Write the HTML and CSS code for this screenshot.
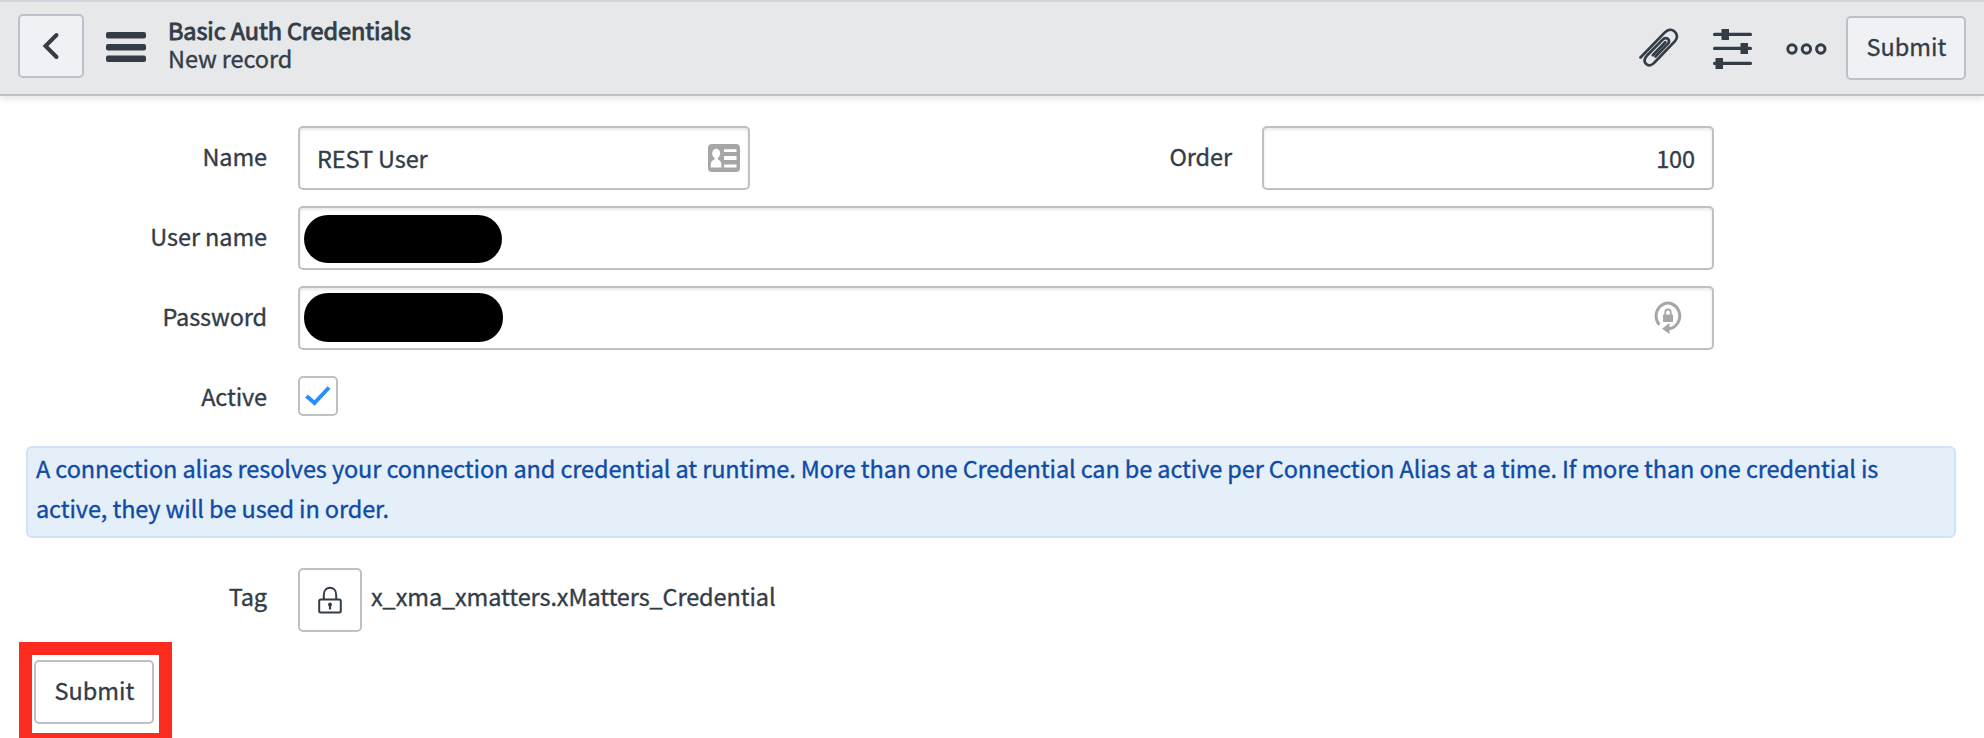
FILE: index.html
```html
<!DOCTYPE html>
<html lang="en">
<head>
<meta charset="utf-8">
<title>Basic Auth Credentials</title>
<link rel="stylesheet" href="styles.css">
</head>
<body>
<header class="toolbar">
  <button class="btn back" aria-label="Back">
    <svg width="18" height="28" viewBox="0 0 18 28"><path d="M14.5 3 3.500 14 14.500 25" fill="none" stroke="#343d47" stroke-width="4" stroke-linecap="round"/></svg>
  </button>
  <svg class="menu" width="40" height="30" viewBox="0 0 40 30" fill="#343d47"><rect width="40" height="6.500" rx="2"/><rect y="12" width="40" height="6.500" rx="2"/><rect y="23.500" width="40" height="6.500" rx="2"/></svg>
  <div class="heading">
    <h1 class="title">Basic Auth Credentials</h1>
    <div class="subtitle">New record</div>
  </div>
  <div class="actions">
    <svg class="clip" width="40" height="40" viewBox="0 0 40 40" fill="none" stroke="#343d47" stroke-width="2.700" stroke-linecap="round" stroke-linejoin="round"><path d="M1.500 29.500 25.600 4.600C28.600 1.500 32.500.8 35.300 3.200C38.600 6 38.800 10.200 36 13.200L15.500 34.500C13 37.500 9.600 38.300 7.200 36C4.800 33.600 5.300 30.500 7.800 27.800L23.700 11.600C25.400 9.800 27.600 9.600 29 11C30.400 12.400 30 14.600 28.500 16.200L16.500 28.500"/><path d="M13.800 27.200 26.300 14.200"/></svg>
    <svg class="sliders" width="40" height="40" viewBox="0 0 40 40" fill="#343d47"><rect y="3.700" width="39" height="3.300" rx="1.500"/><rect x="8.500" width="7.500" height="11"/><rect y="17.700" width="39" height="3.300" rx="1.500"/><rect x="27.500" y="14" width="7.500" height="11"/><rect y="32.700" width="39" height="3.300" rx="1.500"/><rect x="2.500" y="29" width="7.500" height="11"/></svg>
    <svg class="dots" width="41" height="12" viewBox="0 0 41 12" fill="none" stroke="#343d47" stroke-width="3"><circle cx="6" cy="6" r="4.200"/><circle cx="20.400" cy="6" r="4.200"/><circle cx="34.800" cy="6" r="4.200"/></svg>
    <button class="btn submit">Submit</button>
  </div>
</header>
<main class="form">
  <div class="row">
    <label class="label">Name</label>
    <div class="field half"><span class="value">REST User</span>
      <svg class="card" width="32" height="28" viewBox="0 0 32 28"><rect width="32" height="28" rx="4" fill="#a6a6a6"/><g fill="#fff"><ellipse cx="8.200" cy="9.500" rx="4" ry="4.700"/><path d="M6.500 13h3.400v2.500c2.300.7 3.500 2.500 3.500 5.500V23.500H2.700V21c0-3 1.300-4.800 3.800-5.500z"/><rect x="16" y="5.200" width="12.500" height="2.800"/><rect x="16" y="12" width="12.500" height="4"/><rect x="16" y="20.500" width="12.500" height="3"/></g></svg>
    </div>
    <label class="label order">Order</label>
    <div class="field half number"><span class="value">100</span></div>
  </div>
  <div class="row">
    <label class="label">User name</label>
    <div class="field"><span class="mask"></span></div>
  </div>
  <div class="row">
    <label class="label">Password</label>
    <div class="field"><span class="mask mask-password"></span>
      <svg class="refresh" width="28" height="34" viewBox="0 0 28 34"><path d="M5.300 23.700A11.800 12.800 0 1 1 15 27.700" fill="none" stroke="#a6a6a6" stroke-width="3"/><path d="M8 27.700 15.500 22v11z" fill="#a6a6a6"/><rect x="9" y="13.500" width="10" height="7.500" rx=".7" fill="#a6a6a6"/><path d="M11.200 14v-2.500c0-4 5.600-4 5.600 0V14" fill="none" stroke="#a6a6a6" stroke-width="1.800"/></svg>
    </div>
  </div>
  <div class="row">
    <label class="label">Active</label>
    <span class="checkbox"><svg width="28" height="22" viewBox="0 0 28 22"><path d="M2.500 11 10.500 18 25 2.500" fill="none" stroke="#278efc" stroke-width="4"/></svg></span>
  </div>
  <p class="notice">A connection alias resolves your connection and credential at runtime. More than one Credential can be active per Connection Alias at a time. If more than one credential is<br>active, they will be used in order.</p>
  <div class="row tag-row">
    <label class="label tag-label">Tag</label>
    <button class="btn lock" aria-label="Unlock"><svg width="24" height="28" viewBox="0 0 24 28" fill="none" stroke="#343d47" stroke-width="2"><rect x="1.200" y="13.500" width="21.600" height="13" rx="1.500"/><path d="M5.800 13.500V9C5.800-.7 18.200-.7 18.200 9V13.500"/><path d="M12 18v5.500" stroke-width="2.200"/><circle cx="12" cy="18.500" r="2" fill="#343d47" stroke="none"/></svg></button>
    <span class="tag-value">x_xma_xmatters.xMatters_Credential</span>
  </div>
  <div class="highlight"><button class="btn submit">Submit</button></div>
</main>
</body>
</html>
```

FILE: styles.css
```css
* { box-sizing: border-box; }

body {
  margin: 0;
  height: 738px;
  overflow: hidden;
  background: #fff;
  color: #343d47;
  font: 23.5px/28px "Noto Sans CJK SC", "Noto Sans", sans-serif;
  letter-spacing: -.107px;
  -webkit-text-stroke: .35px currentColor;
}

svg { display: block; flex: none; }

.toolbar {
  display: flex;
  align-items: flex-start;
  height: 96px;
  padding: 12px 18px 0;
  background: #e6e8ea;
  border-top: 2px solid #d4d6de;
  border-bottom: 2px solid #bdc0c9;
  box-shadow: 0 2px 8px rgba(0, 0, 0, .12);
}

.btn {
  display: flex;
  align-items: center;
  justify-content: center;
  flex: none;
  height: 64px;
  padding: 0;
  border: 2px solid #bdc0c4;
  border-radius: 5px;
  background: #fff;
  color: inherit;
  font: inherit;
}

.toolbar .btn { background: #f0f1f4; border-color: #bdc0c9; }
.toolbar .back { width: 66px; }
.submit { width: 120px; padding: 0 0 4px 1px; }
.menu { margin: 18px 0 0 22px; }
.heading { margin: 2px 0 0 22px; }
.title { margin: 0; font-size: inherit; font-weight: 400; -webkit-text-stroke-width: .9px; }

.actions { display: flex; align-items: flex-start; margin-left: auto; }
.actions .submit { margin: 2px 0 0 19px; }
.clip { margin-top: 14px; }
.sliders { margin: 15px 0 0 34px; }
.dots { margin: 29px 0 0 33px; }

.form { padding: 30px 28px 0 26px; }

.row { display: flex; align-items: center; width: 1688px; height: 64px; margin-bottom: 16px; }
.label { width: 241px; margin-right: 31px; padding-bottom: 4px; text-align: right; }
.order { width: 482px; margin-right: 30px; }

.field {
  display: flex;
  align-items: center;
  flex: 1;
  height: 64px;
  padding: 0 17px;
  border: 2px solid #bdc0c4;
  border-radius: 5px;
  box-shadow: inset 0 2px 3px rgba(0, 0, 0, .09);
}
.half { flex: 0 0 452px; }
.number { justify-content: flex-end; }
.card { margin: 0 -9px 0 auto; }
.mask { width: 198px; height: 48px; margin: 2px 0 0 -13px; border-radius: 24px; background: #000; }
.mask-password { width: 199px; height: 49px; margin-top: -1px; }
.refresh { margin: 0 13px 0 auto; }

.checkbox {
  display: flex;
  align-items: center;
  justify-content: center;
  width: 40px;
  height: 40px;
  margin-bottom: 4px;
  border: 2px solid #bdc0c4;
  border-radius: 5px;
}

.notice {
  height: 92px;
  margin: 0 0 30px;
  padding: 0 8px;
  border: 2px solid #cfe2f8;
  border-radius: 6px;
  background: #e5eff9;
  color: #0f4ba6;
  line-height: 40px;
  white-space: nowrap;
}

.tag-row { margin-bottom: 10px; }
.tag-label { padding-bottom: 8px; }
.lock { width: 64px; }
.tag-value { margin-left: 9px; padding-bottom: 8px; }

.highlight {
  width: 153px;
  height: 104px;
  margin-left: -7px;
  padding: 5px 2px;
  border: 13px solid #fc2b1f;
}
```
